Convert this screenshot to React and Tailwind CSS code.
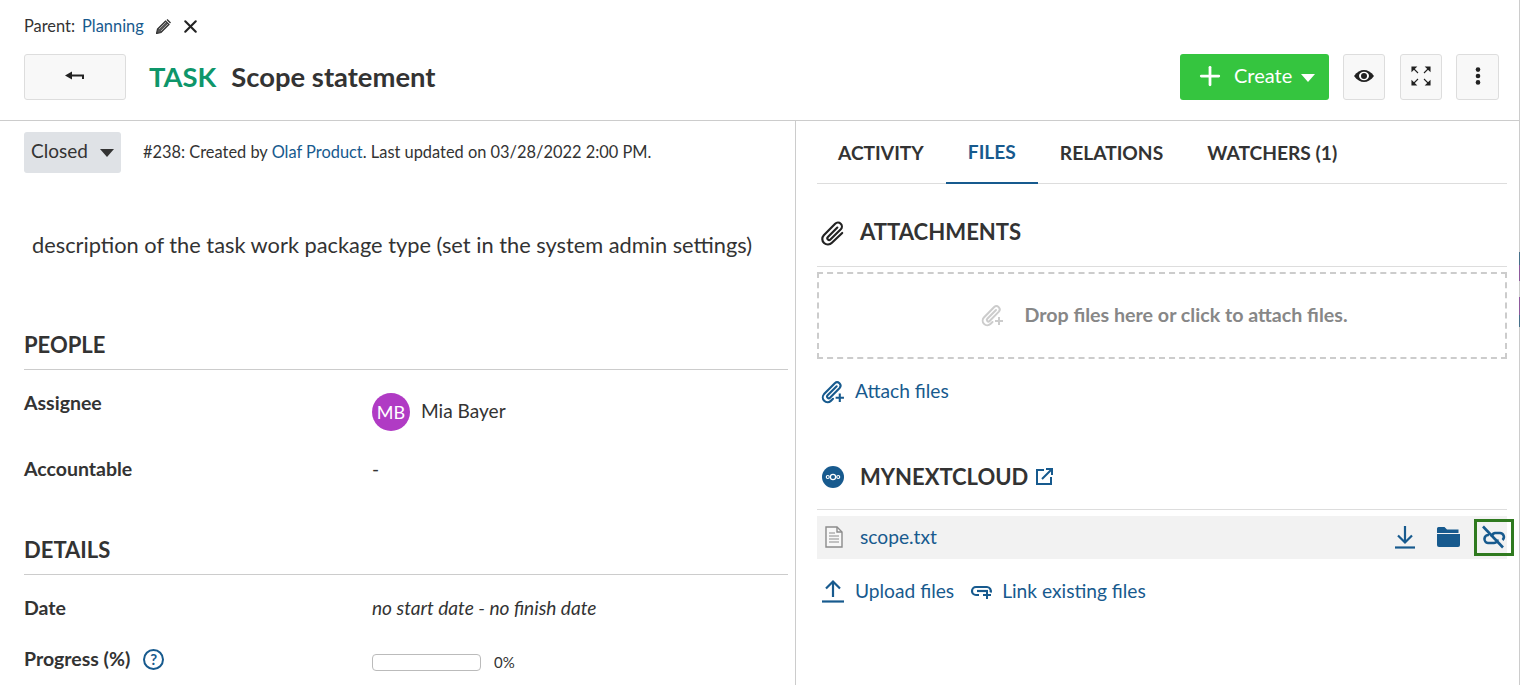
import { Plus, X } from "lucide-react";

const LINK = "text-[#175a8e]";

function PaperclipIcon({ size = 24, className = "", plus = false }) {
  return (
    <svg width={size} height={size} viewBox="0 0 24 24" fill="none" stroke="currentColor" strokeWidth="2" strokeLinecap="round" strokeLinejoin="round" className={className}>
      <path d={plus ? "M12.5 19l-2.1 2a4.6 4.6 0 0 1-6.5-6.5L14.2 4a3.3 3.3 0 0 1 4.7 4.6L9.6 18a1.6 1.6 0 0 1-2.3-2.3L16 7" : "M20.5 12L11 21a5 5 0 0 1-7.5-7L14 3.5a3.6 3.6 0 0 1 5.2 5L9.6 18a1.6 1.6 0 0 1-2.3-2.3L16 7"} />
      {plus && <path d="M19 14v8M15 18h8" strokeLinecap="butt" />}
    </svg>
  );
}

function BackIcon() {
  return (
    <svg width="20" height="10" viewBox="0 0 20 10" className="text-[#222]">
      <path d="M0 4.5l7-4v8z" fill="currentColor" />
      <path d="M6 3.5h13v4.5h-2V5.5H6z" fill="currentColor" />
    </svg>
  );
}

function PencilIcon() {
  return (
    <svg width="15" height="15" viewBox="0 0 15 15">
      <path d="M0.5 14.5l1-4.5 8-8 3.500 3.500-8 8z" fill="#555" stroke="#333" strokeWidth="1.200" />
      <path d="M3 10l7-7M5 12l7-7" stroke="#fff" strokeWidth="0.500" />
      <path d="M10.500 1l1-1 3.500 3.500-1 1z" fill="#333" />
    </svg>
  );
}

function EyeIcon() {
  return (
    <svg width="20" height="12" viewBox="0 0 20 12">
      <path d="M0 6C3 1.800 6.500 0 10 0s7 1.800 10 6c-3 4.200-6.500 6-10 6S3 10.200 0 6z" fill="#222" />
      <ellipse cx="10" cy="6" rx="5" ry="4.200" fill="#fff" />
      <circle cx="10" cy="6" r="3" fill="#222" />
    </svg>
  );
}

function ExpandIcon() {
  return (
    <svg width="20" height="20" viewBox="0 0 20 20" fill="#222" stroke="#222" strokeWidth="1.100">
      <path d="M1 1h4L1 5z" />
      <path d="M2 2l5 5" fill="none" />
      <path d="M19 1h-4l4 4z" />
      <path d="M18 2l-5 5" fill="none" />
      <path d="M1 19h4l-4-4z" />
      <path d="M2 18l5-5" fill="none" />
      <path d="M19 19h-4l4-4z" />
      <path d="M18 18l-5-5" fill="none" />
    </svg>
  );
}

function DotsIcon() {
  return (
    <svg width="6" height="18" viewBox="0 0 6 18" fill="#222">
      <circle cx="3" cy="2.600" r="2.300" />
      <circle cx="3" cy="9" r="2.300" />
      <circle cx="3" cy="15.400" r="2.300" />
    </svg>
  );
}

function CloudIcon() {
  return (
    <svg width="22" height="22" viewBox="0 0 22 22">
      <circle cx="11" cy="11" r="11" fill="#175a8e" />
      <g fill="none" stroke="#fff" strokeWidth="1.200">
        <circle cx="11" cy="11" r="2.600" />
        <circle cx="5.800" cy="11" r="1.500" />
        <circle cx="16.200" cy="11" r="1.500" />
      </g>
    </svg>
  );
}

function ExternalIcon() {
  return (
    <svg width="17" height="17" viewBox="0 0 17 17" fill="none" stroke="#175a8e" strokeWidth="2">
      <path d="M8 2H1v14h14V9" />
      <path d="M6 11L15.500 1.500M10 1h6v6" />
    </svg>
  );
}

function LinkPlus() {
  return (
    <svg width="24" height="18" viewBox="0 0 24 18" fill="none" stroke="#175a8e" strokeWidth="2.200">
      <path d="M9 13H6a4 4 0 0 1 0-8h11a4 4 0 0 1 3.500 5.500" />
      <path d="M7 9h11" />
      <path d="M17 9v8M13 13h8" strokeWidth="2" />
    </svg>
  );
}

function DocIcon() {
  return (
    <svg width="18" height="22" viewBox="0 0 18 22" fill="none" stroke="#8c8c8c" strokeWidth="1.400">
      <path d="M1 1h11l5 5v15H1z" fill="#f8f8f8" />
      <path d="M12 1v5h5" />
      <path d="M4 7h6M4 10h10M4 13h10M4 16h10" strokeWidth="1.200" />
    </svg>
  );
}

function DownloadIcon() {
  return (
    <svg width="20" height="24" viewBox="0 0 20 24" fill="none" stroke="#175a8e" strokeWidth="2.200">
      <path d="M10 1v16M3 10.500l7 7 7-7" />
      <path d="M0 22.500h20" />
    </svg>
  );
}

function UploadIcon() {
  return (
    <svg width="22" height="24" viewBox="0 0 22 24" fill="none" stroke="#175a8e" strokeWidth="2.200">
      <path d="M11 18V3M4 9.500l7-7 7 7" />
      <path d="M0 22.500h22" />
    </svg>
  );
}

function FolderIcon() {
  return (
    <svg width="23" height="20" viewBox="0 0 23 20" fill="#175a8e">
      <path d="M0 1.500A1.500 1.500 0 0 1 1.500 0h6l2.500 2.500h11.500v3.500H0z" />
      <path d="M0 7h23v11a2 2 0 0 1-2 2H2a2 2 0 0 1-2-2z" />
    </svg>
  );
}

function UnlinkIcon() {
  return (
    <svg width="24" height="24" viewBox="0 0 24 24" fill="none" stroke="#175a8e" strokeWidth="2.600">
      <path d="M7 10a4 4 0 0 0-1 8h6a3.800 3.800 0 0 0 3.500-3.500" />
      <path d="M10 11.500A3.500 3.500 0 0 1 13 8h5a4 4 0 0 1 2.500 7" />
      <path d="M1 1.500l20 21" />
    </svg>
  );
}

function HelpIcon() {
  return (
    <span className="w-[21px] h-[21px] rounded-full border-2 border-[#175a8e] text-[#175a8e] flex items-center justify-center text-[15px] font-bold leading-none">?</span>
  );
}

function SquareBtn({ width, children }) {
  return (
    <button className={`${width} h-[46px] pb-[3px] flex items-center justify-center rounded-[3px] border border-[#ddd] bg-[#f8f8f8]`}>
      {children}
    </button>
  );
}

function SectionTitle({ children, mt }) {
  return (
    <div className={`${mt} h-[39px] border-b border-[#ccc] mr-[7px] text-[22px] leading-[28px] font-bold text-[#333]`}>
      {children}
    </div>
  );
}

function Field({ label, help, rowClass, children }) {
  return (
    <div className={`flex ${rowClass}`}>
      <div className="w-[348px] shrink-0 flex items-center gap-[13px] self-start text-[19.5px] leading-[24px] font-bold text-[#333]">
        {label}
        {help && <HelpIcon />}
      </div>
      <div className="flex-1 text-[19.1px] leading-[24px] text-[#333]">{children}</div>
    </div>
  );
}

// Thin edge of the window behind the page, with a sliver of what sits behind it
function EdgeStrip() {
  return (
    <div className="w-[1px] shrink-0 flex flex-col bg-[#ccc]">
      <div className="mt-[252px] h-[13px] bg-[#47708a]" />
      <div className="h-[16px] bg-[#8d5a9c]" />
      <div className="mt-[16px] h-[18px] bg-[#8d5a9c]" />
      <div className="h-[12px] bg-[#47708a]" />
    </div>
  );
}

export default function App() {
  return (
    <div className="w-[1520px] h-[685px] overflow-hidden bg-white text-[#333] font-['Lato','Open_Sans',sans-serif] flex">
      <div className="flex-1 min-w-0 flex flex-col">
        {/* Toolbar */}
        <header className="h-[121px] shrink-0 border-b border-[#ccc] pl-[24px] pr-[20px] pt-[16px]">
          <div className="h-[20px] flex items-center text-[16.4px] leading-[20px]">
            <span>Parent:</span>
            <span className={`ml-[7px] ${LINK}`}>Planning</span>
            <span className="ml-[12px]"><PencilIcon /></span>
            <X size={21} strokeWidth={2.400} className="ml-[9px] text-[#222]" />
          </div>
          <div className="mt-[18px] flex items-center">
            <SquareBtn width="w-[102px]"><BackIcon /></SquareBtn>
            <span className="ml-[23px] text-[27.4px] font-bold text-[#0e966a]">TASK</span>
            <span className="ml-[15px] text-[27.4px] font-bold text-[#333]">Scope statement</span>
            <button className="ml-auto w-[149px] h-[46px] rounded-[3px] bg-[#35c53f] text-white flex items-center pl-[15px] text-[20px] pb-[2px]">
              <Plus size={30} strokeWidth={2.200} />
              <span className="ml-[9px] mb-[3px]">Create</span>
              <span className="ml-[9px] mt-[3px] w-0 h-0 border-x-[7px] border-x-transparent border-t-[8px] border-t-white" />
            </button>
            <div className="ml-[14px]"><SquareBtn width="w-[42px]"><EyeIcon /></SquareBtn></div>
            <div className="ml-[15px]"><SquareBtn width="w-[42px]"><ExpandIcon /></SquareBtn></div>
            <div className="ml-[14px]"><SquareBtn width="w-[43px]"><DotsIcon /></SquareBtn></div>
          </div>
        </header>

        <div className="flex-1 flex min-h-0">
          {/* Left column */}
          <main className="w-[796px] shrink-0 border-r border-[#ccc] pl-[24px]">
            <div className="mt-[11px] flex items-center">
              <button className="w-[97px] h-[41px] rounded-[3px] bg-[#dfe2e6] flex items-center pl-[7px] pb-[2px] text-[19px] text-[#333]">
                Closed
                <span className="ml-[12px] mt-[2px] w-0 h-0 border-x-[7px] border-x-transparent border-t-[8px] border-t-[#333]" />
              </button>
              <p className="ml-[22px] text-[16.4px]">
                #238: Created by <span className={LINK}>Olaf Product</span>. Last updated on 03/28/2022 2:00 PM.
              </p>
            </div>
            <p className="mt-[58px] ml-[8px] text-[21.8px] leading-[28px]">description of the task work package type (set in the system admin settings)</p>

            <SectionTitle mt="mt-[72px]">PEOPLE</SectionTitle>
            <Field label="Assignee" rowClass="mt-[21px] h-[66px]">
              <div className="flex items-center gap-[11px] mt-[2px]">
                <span className="w-[38px] h-[38px] rounded-full bg-[#b03bc4] text-white flex items-center justify-center text-[18px]">MB</span>
                <span className="pb-[2px]">Mia Bayer</span>
              </div>
            </Field>
            <Field label="Accountable" rowClass="h-[50px]">-</Field>

            <SectionTitle mt="mt-[29px]">DETAILS</SectionTitle>
            <Field label="Date" rowClass="mt-[21px] h-[39px]"><i>no start date - no finish date</i></Field>
            <Field label="Progress (%)" help rowClass="mt-[12px]">
              <div className="flex items-center gap-[13px] mt-[3px]">
                <span className="w-[109px] h-[17px] rounded-[4px] border border-[#bbb]" />
                <span className="text-[15px]">0%</span>
              </div>
            </Field>
          </main>

          {/* Right column */}
          <aside className="flex-1 pl-[21px] pr-[12px] min-w-0">
            <nav className="h-[63px] border-b border-[#ddd] flex text-[19.2px] font-bold text-[#333]">
              <span className="pl-[21px] pr-[22px] pt-[2px] flex items-center">ACTIVITY</span>
              <span className={`px-[22px] pt-[2px] flex items-center ${LINK} border-b-2 border-[#175a8e] h-[63px]`}>FILES</span>
              <span className="px-[22px] pt-[2px] flex items-center">RELATIONS</span>
              <span className="px-[22px] pt-[2px] flex items-center">WATCHERS (1)</span>
            </nav>

            <div className="mt-[34px] h-[49px] border-b border-[#ddd] flex items-start text-[22.1px] leading-[28px] font-bold">
              <PaperclipIcon size={26} className="ml-[3px] mt-[2px] mr-[14px] text-[#222]" />
              ATTACHMENTS
            </div>
            <div className="mt-[5px] h-[87px] border-2 border-dashed border-[#ccc] flex items-center justify-center gap-[20px] pl-[4px] pb-[2px] text-[19.65px] font-bold text-[#878787]">
              <PaperclipIcon plus size={24} className="text-[#ccc]" />
              Drop files here or click to attach files.
            </div>
            <div className={`mt-[18px] flex items-center text-[19.2px] ${LINK}`}>
              <PaperclipIcon plus size={25} className="ml-[3px] mr-[10px]" />
              Attach files
            </div>

            <div className="mt-[57px] h-[47px] border-b border-[#ddd] flex items-start text-[22px] leading-[28px] font-bold">
              <span className="mt-[3px] mr-[16px] ml-[5px]"><CloudIcon /></span>
              MYNEXTCLOUD
              <span className="ml-[8px] mt-[5px]"><ExternalIcon /></span>
            </div>
            <div className="mt-[6px] h-[43px] bg-[#f2f2f2] flex items-center pl-[8px]">
              <DocIcon />
              <span className={`ml-[17px] text-[19.2px] ${LINK}`}>scope.txt</span>
              <span className="ml-auto"><DownloadIcon /></span>
              <span className="ml-[22px]"><FolderIcon /></span>
              <span className="ml-[14px] -mr-[7px] w-[40px] h-[37px] border-[3px] border-[#2f7a1f] flex items-center justify-center">
                <UnlinkIcon />
              </span>
            </div>
            <div className={`mt-[18px] flex items-center text-[19.2px] ${LINK}`}>
              <span className="ml-[5px]"><UploadIcon /></span>
              <span className="ml-[11px]">Upload files</span>
              <span className="ml-[16px]"><LinkPlus /></span>
              <span className="ml-[8px]">Link existing files</span>
            </div>
          </aside>
        </div>
      </div>
      <EdgeStrip />
    </div>
  );
}
